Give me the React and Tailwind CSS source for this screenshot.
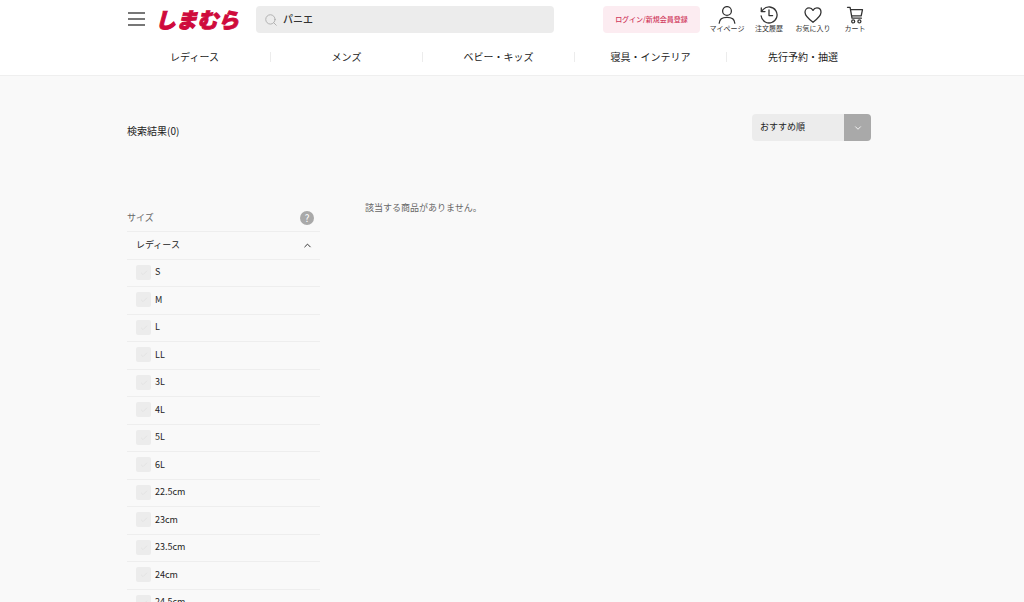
import React from 'react';
import { Search, ChevronDown, ChevronUp, Check } from 'lucide-react';

const categories = ['レディース', 'メンズ', 'ベビー・キッズ', '寝具・インテリア', '先行予約・抽選'];

const sizes = ['S', 'M', 'L', 'LL', '3L', '4L', '5L', '6L', '22.5cm', '23cm', '23.5cm', '24cm', '24.5cm'];

const Icon = ({ children }) => (
  <svg viewBox="0 0 18 18" className="h-[18px] w-[18px]" fill="none" stroke="#333" strokeWidth="1.3" strokeLinecap="round" strokeLinejoin="round" aria-hidden="true">
    {children}
  </svg>
);

const userLinks = [
  {
    label: 'マイページ',
    width: 'w-10',
    icon: (
      <Icon>
        <circle cx="9" cy="5" r="4.4" />
        <path d="M1.2 17.2c.2-4 3.300-5.800 7.800-5.800s7.600 1.800 7.800 5.800" />
      </Icon>
    ),
  },
  {
    label: '注文履歴',
    width: 'w-11',
    icon: (
      <Icon>
        <path d="M1.100 9.800A8 8 0 1 0 3.300 3.400L1.500 5.400" />
        <path d="M1.300 2v3.600h3.700M9 4v5.600h3.600" />
      </Icon>
    ),
  },
  {
    label: 'お気に入り',
    width: 'w-11',
    icon: (
      <Icon>
        <path d="M9 16.300C4.500 12.900 1 9.900 1 6.300 1 3.600 2.900 1.900 5.100 1.900c1.700 0 3.100 1 3.900 2.500.8-1.500 2.200-2.500 3.900-2.500C15.100 1.900 17 3.600 17 6.300c0 3.600-3.500 6.600-8 10z" />
      </Icon>
    ),
  },
  {
    label: 'カート',
    width: 'w-10',
    icon: (
      <Icon>
        <path d="M1.500 1.300h2.600l1.900 10.900h9.400M4.600 3.700h11.900l-1.300 6.100H5.700" />
        <circle cx="7.200" cy="15.400" r="1.500" />
        <circle cx="13.400" cy="15.400" r="1.500" />
      </Icon>
    ),
  },
];

const Header = () => (
  <header className="border-b border-[#efefef] bg-white pr-[26px]">
    <div className="mx-auto max-w-[760px]">
      <div className="flex items-center pt-[6px] pl-[9px]">
        <button type="button" aria-label="メニュー" className="flex w-[17px] flex-col gap-1 pb-[2px]">
          <span className="h-[2px] bg-[#777]" />
          <span className="h-[2px] bg-[#777]" />
          <span className="h-[2px] bg-[#777]" />
        </button>

        <a
          href="#"
          className="ml-[10px] w-[84px] text-[21px] leading-[25px] font-black whitespace-nowrap text-[#cf0a3c] italic [-webkit-text-stroke:1px_#cf0a3c]"
        >
          しまむら
        </a>

        <form className="ml-[17px] flex h-[27px] flex-1 items-center rounded-sm bg-[#ececec] px-2">
          <Search className="h-[14px] w-[14px] text-[#aaa]" strokeWidth={1.5} />
          <input
            type="text"
            aria-label="商品検索"
            defaultValue="パニエ"
            className="ml-[5px] min-w-0 flex-1 bg-transparent pb-[2px] text-[10px] font-medium text-[#333] outline-none"
          />
        </form>

        <a href="#" className="ml-[49px] flex h-[27px] w-[97px] items-center justify-center rounded-sm bg-[#fcecf1] text-[7px] font-medium text-[#d0395c]">
          ログイン/新規会員登録
        </a>

        <nav className="mr-1 ml-[7px] flex">
          {userLinks.map((link) => (
            <a key={link.label} href="#" className={`flex flex-col items-center text-[7px] leading-[9px] whitespace-nowrap text-[#333] ${link.width}`}>
              {link.icon}
              {link.label}
            </a>
          ))}
        </nav>
      </div>

      <nav className="grid grid-cols-5 items-center pt-[19px] pb-[13px]">
        {categories.map((name) => (
          <a key={name} href="#" className="border-r border-[#ececec] text-center text-[10px] leading-[10px] text-[#222] last:border-r-0">
            {name}
          </a>
        ))}
      </nav>
    </div>
  </header>
);

const SizeFilter = () => (
  <aside className="w-[193px] text-[9px]">
    <div className="flex h-7 items-center justify-between border-b border-[#eee] pr-[6px] text-[#666]">
      <h2>サイズ</h2>
      <button type="button" aria-label="サイズについて" className="h-[14px] w-[14px] rounded-full bg-[#a9a9a9] text-[10px] leading-[14px] text-white">
        ?
      </button>
    </div>

    <button type="button" className="flex h-7 w-full items-center justify-between border-b border-[#eee] pr-[7px] pl-[9px] text-[#222]">
      <span className="pb-[2px]">レディース</span>
      <ChevronUp className="h-[11px] w-[11px]" />
    </button>

    <ul>
      {sizes.map((size) => (
        <li key={size} className="border-b border-[#eee] odd:h-[27px] even:h-7">
          <label className="flex h-full items-center pb-[2px] pl-[9px] text-[#222]">
            <span className="relative mr-1 h-[15px] w-[15px]">
              <input type="checkbox" className="block h-[15px] w-[15px] appearance-none rounded-xs bg-[#ececec]" />
              <Check className="pointer-events-none absolute top-1 left-1 h-2 w-2 text-[#dedede]" />
            </span>
            {size}
          </label>
        </li>
      ))}
    </ul>
  </aside>
);

export default function App() {
  return (
    <div className="min-h-screen bg-[#f9f9f9] font-['Noto_Sans_CJK_JP',sans-serif]">
      <Header />

      <main className="pt-[38px] pr-[26px]">
        <div className="mx-auto max-w-[760px] px-2">
          <div className="flex items-start justify-between">
            <h1 className="pt-[9px] text-[10px] leading-4 text-[#222]">検索結果(0)</h1>
            <div className="relative w-[119px] overflow-hidden rounded-sm">
              <select aria-label="並び順" className="block h-[27px] w-full appearance-none bg-[#ececec] pb-[2px] pl-2 text-[9px] text-[#222]">
                <option>おすすめ順</option>
              </select>
              <span className="pointer-events-none absolute inset-y-0 right-0 flex w-[27px] items-center justify-center bg-[#a9a9a9] text-white">
                <ChevronDown className="h-[10px] w-[10px]" />
              </span>
            </div>
          </div>

          <div className="flex gap-[45px] pt-[63px]">
            <SizeFilter />
            <p className="text-[9px] leading-[8px] text-[#666]">該当する商品がありません。</p>
          </div>
        </div>
      </main>
    </div>
  );
}
